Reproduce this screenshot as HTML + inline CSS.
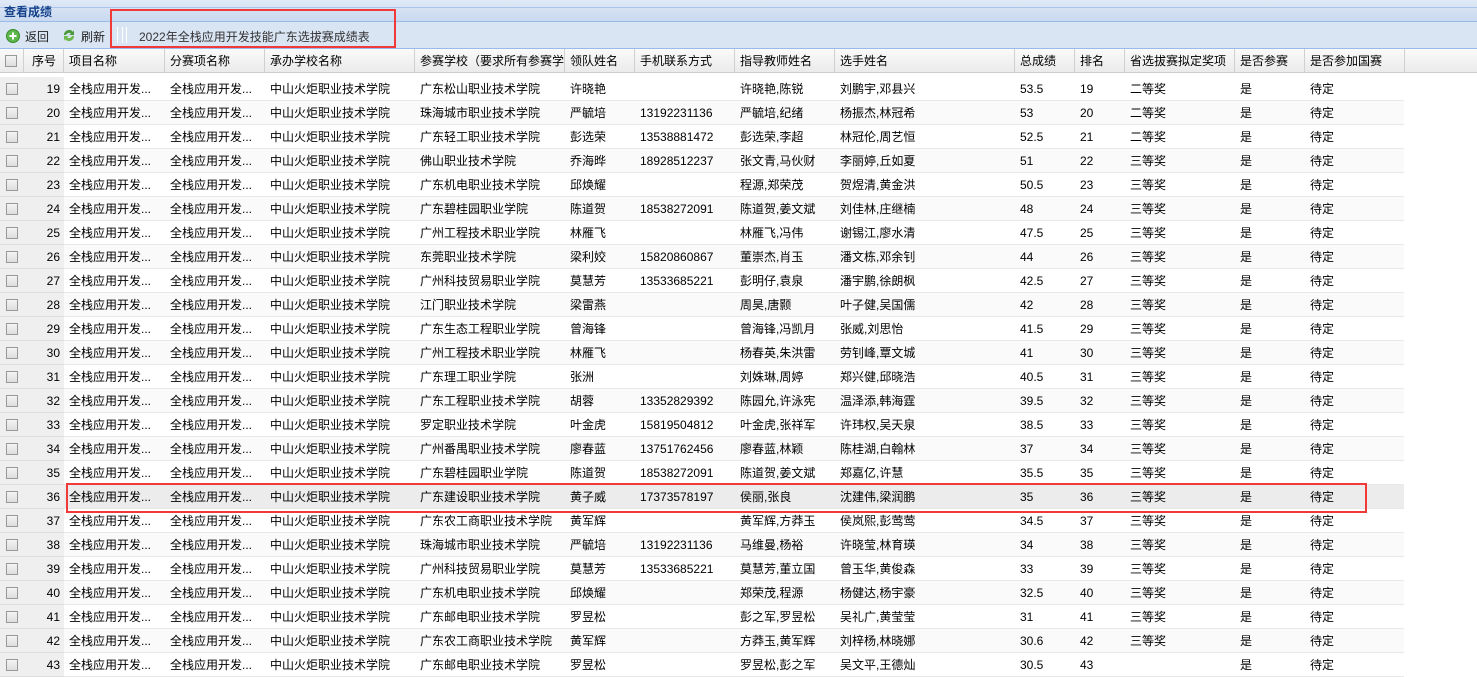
<!DOCTYPE html><html><head><meta charset="utf-8"><style>
*{margin:0;padding:0;box-sizing:border-box}
body{width:1477px;height:676px;overflow:hidden;background:#fff;font:12px "Liberation Sans","Noto Sans CJK SC",sans-serif;color:#000;position:relative}
.title{position:absolute;left:0;top:0;width:1477px;height:22px;background:linear-gradient(#e0e9f6,#c9d9f0);border-bottom:1px solid #99bbe8;}
.title .l{position:absolute;top:7px;left:0;right:0;height:1px;background:#a9c3ea}
.title span{position:absolute;left:4px;top:3px;font-weight:bold;color:#15428b;font-size:12px}
.tb{position:absolute;left:0;top:22px;width:1477px;height:27px;background:#dae5f4;border-bottom:1px solid #99bbe8}
.tb div{position:absolute;top:6px;font-size:12px;color:#222}
.hdr{position:absolute;top:49px;left:0;width:1477px;height:24px;background:linear-gradient(#fafafa,#ebebeb);border-bottom:1px solid #ccc}
.c{position:absolute;height:24px;line-height:24px;white-space:nowrap;overflow:hidden;padding-left:5px}
.hdr .c{border-right:1px solid #d0d0d0;line-height:24px}
.row{position:absolute;left:0;width:1404px;height:24px;border-bottom:1px solid #e8e8e8}
.gray{position:absolute;left:0;width:64px;height:24px;background:#efefef;border-bottom:1px solid #ddd}
.cb{position:absolute;left:6px;width:12px;height:12px;border:1px solid #999;background:linear-gradient(#f4f4f4,#ddd)}
.red{position:absolute;border:2px solid #f03a3a}
</style></head><body>
<div class="title"><div class="l"></div><span>查看成绩</span></div>
<div class="tb">
<svg style="position:absolute;left:6px;top:7px" width="14" height="14"><circle cx="7" cy="7" r="6.5" fill="#5cb84a" stroke="#3a8a2a"/><path d="M7 3.5v7M3.5 7h7" stroke="#fff" stroke-width="2"/></svg>
<div style="left:25px">返回</div>
<svg style="position:absolute;left:61px;top:6px" width="16" height="15"><path d="M3 7a5 5 0 0 1 9-3l1-2v5h-5l2-1.5A3.3 3.3 0 0 0 5 7z" fill="#4a9a3a"/><path d="M13 8a5 5 0 0 1-9 3l-1 2V8h5l-2 1.5A3.3 3.3 0 0 0 11 8z" fill="#6cb84c"/></svg>
<div style="left:81px">刷新</div>
<div style="left:117px;top:5px;width:10px;height:16px;border-left:1px solid #fff;border-right:1px solid #fff;"></div>
<div style="left:122px;top:5px;width:1px;height:16px;background:#fff"></div>
<div style="left:139px;color:#333">2022年全栈应用开发技能广东选拔赛成绩表</div>
</div>
<div class="red" style="left:110px;top:9px;width:286px;height:39px"></div>
<div class="hdr">
<div class="c" style="left:0;width:24px"><div class="cb" style="top:6px;left:5px"></div></div>
<div class="c" style="left:24px;width:40px;padding-left:8px">序号</div>
<div class="c" style="left:64px;width:101px">项目名称</div>
<div class="c" style="left:165px;width:100px">分赛项名称</div>
<div class="c" style="left:265px;width:150px">承办学校名称</div>
<div class="c" style="left:415px;width:150px">参赛学校（要求所有参赛学校</div>
<div class="c" style="left:565px;width:70px">领队姓名</div>
<div class="c" style="left:635px;width:100px">手机联系方式</div>
<div class="c" style="left:735px;width:100px">指导教师姓名</div>
<div class="c" style="left:835px;width:180px">选手姓名</div>
<div class="c" style="left:1015px;width:60px">总成绩</div>
<div class="c" style="left:1075px;width:50px">排名</div>
<div class="c" style="left:1125px;width:110px">省选拔赛拟定奖项</div>
<div class="c" style="left:1235px;width:70px">是否参赛</div>
<div class="c" style="left:1305px;width:100px">是否参加国赛</div>
</div>
<div id="rows"></div>
<div class="red" style="left:66px;top:483px;width:1301px;height:30px"></div>
<script>
var d=[
[19,"广东松山职业技术学院","许晓艳","","许晓艳,陈锐","刘鹏宇,邓县兴","53.5","二等奖"],
[20,"珠海城市职业技术学院","严毓培","13192231136","严毓培,纪绪","杨振杰,林冠希","53","二等奖"],
[21,"广东轻工职业技术学院","彭选荣","13538881472","彭选荣,李超","林冠伦,周艺恒","52.5","二等奖"],
[22,"佛山职业技术学院","乔海晔","18928512237","张文青,马伙财","李丽婷,丘如夏","51","三等奖"],
[23,"广东机电职业技术学院","邱焕耀","","程源,郑荣茂","贺煜清,黄金洪","50.5","三等奖"],
[24,"广东碧桂园职业学院","陈道贺","18538272091","陈道贺,姜文斌","刘佳林,庄继楠","48","三等奖"],
[25,"广州工程技术职业学院","林雁飞","","林雁飞,冯伟","谢锡江,廖水清","47.5","三等奖"],
[26,"东莞职业技术学院","梁利姣","15820860867","董崇杰,肖玉","潘文栋,邓余钊","44","三等奖"],
[27,"广州科技贸易职业学院","莫慧芳","13533685221","彭明仔,袁泉","潘宇鹏,徐朗枫","42.5","三等奖"],
[28,"江门职业技术学院","梁雷燕","","周昊,唐颢","叶子健,吴国儒","42","三等奖"],
[29,"广东生态工程职业学院","曾海锋","","曾海锋,冯凯月","张威,刘思怡","41.5","三等奖"],
[30,"广州工程技术职业学院","林雁飞","","杨春英,朱洪雷","劳钊峰,覃文城","41","三等奖"],
[31,"广东理工职业学院","张洲","","刘姝琳,周婷","郑兴健,邱晓浩","40.5","三等奖"],
[32,"广东工程职业技术学院","胡蓉","13352829392","陈园允,许泳宪","温泽添,韩海霆","39.5","三等奖"],
[33,"罗定职业技术学院","叶金虎","15819504812","叶金虎,张祥军","许玮权,吴天泉","38.5","三等奖"],
[34,"广州番禺职业技术学院","廖春蓝","13751762456","廖春蓝,林颖","陈桂湖,白翰林","37","三等奖"],
[35,"广东碧桂园职业学院","陈道贺","18538272091","陈道贺,姜文斌","郑嘉亿,许慧","35.5","三等奖"],
[36,"广东建设职业技术学院","黄子威","17373578197","侯丽,张良","沈建伟,梁润鹏","35","三等奖"],
[37,"广东农工商职业技术学院","黄军辉","","黄军辉,方莽玉","侯岚熙,彭莺莺","34.5","三等奖"],
[38,"珠海城市职业技术学院","严毓培","13192231136","马维曼,杨裕","许晓莹,林育瑛","34","三等奖"],
[39,"广州科技贸易职业学院","莫慧芳","13533685221","莫慧芳,董立国","曾玉华,黄俊森","33","三等奖"],
[40,"广东机电职业技术学院","邱焕耀","","郑荣茂,程源","杨健达,杨宇豪","32.5","三等奖"],
[41,"广东邮电职业技术学院","罗昱松","","彭之军,罗昱松","吴礼广,黄莹莹","31","三等奖"],
[42,"广东农工商职业技术学院","黄军辉","","方莽玉,黄军辉","刘梓杨,林晓娜","30.6","三等奖"],
[43,"广东邮电职业技术学院","罗昱松","","罗昱松,彭之军","吴文平,王德灿","30.5",""]];
var h="";
d.forEach(function(r,i){var t=77+i*24;var bg=r[0]==36?"#ececec":(i%2?"#fafafa":"#fff");
h+='<div class="row" style="top:'+t+'px;background:'+bg+'"></div><div class="gray" style="top:'+t+'px"><div class="cb" style="top:6px"></div></div>';
var cols=[[24,40,r[0],'right'],[64,101,"全栈应用开发..."],[165,100,"全栈应用开发..."],[265,150,"中山火炬职业技术学院"],[415,150,r[1]],[565,70,r[2]],[635,100,r[3]],[735,100,r[4]],[835,180,r[5]],[1015,60,r[6]],[1075,50,r[0]],[1125,110,r[7]],[1235,70,"是"],[1305,100,"待定"]];
cols.forEach(function(c){h+='<div class="c" style="top:'+t+'px;left:'+c[0]+'px;width:'+c[1]+'px;'+(c[3]?'text-align:right;padding-right:4px':'')+'">'+c[2]+'</div>';});});
document.getElementById("rows").innerHTML=h;
</script>
</body></html>
